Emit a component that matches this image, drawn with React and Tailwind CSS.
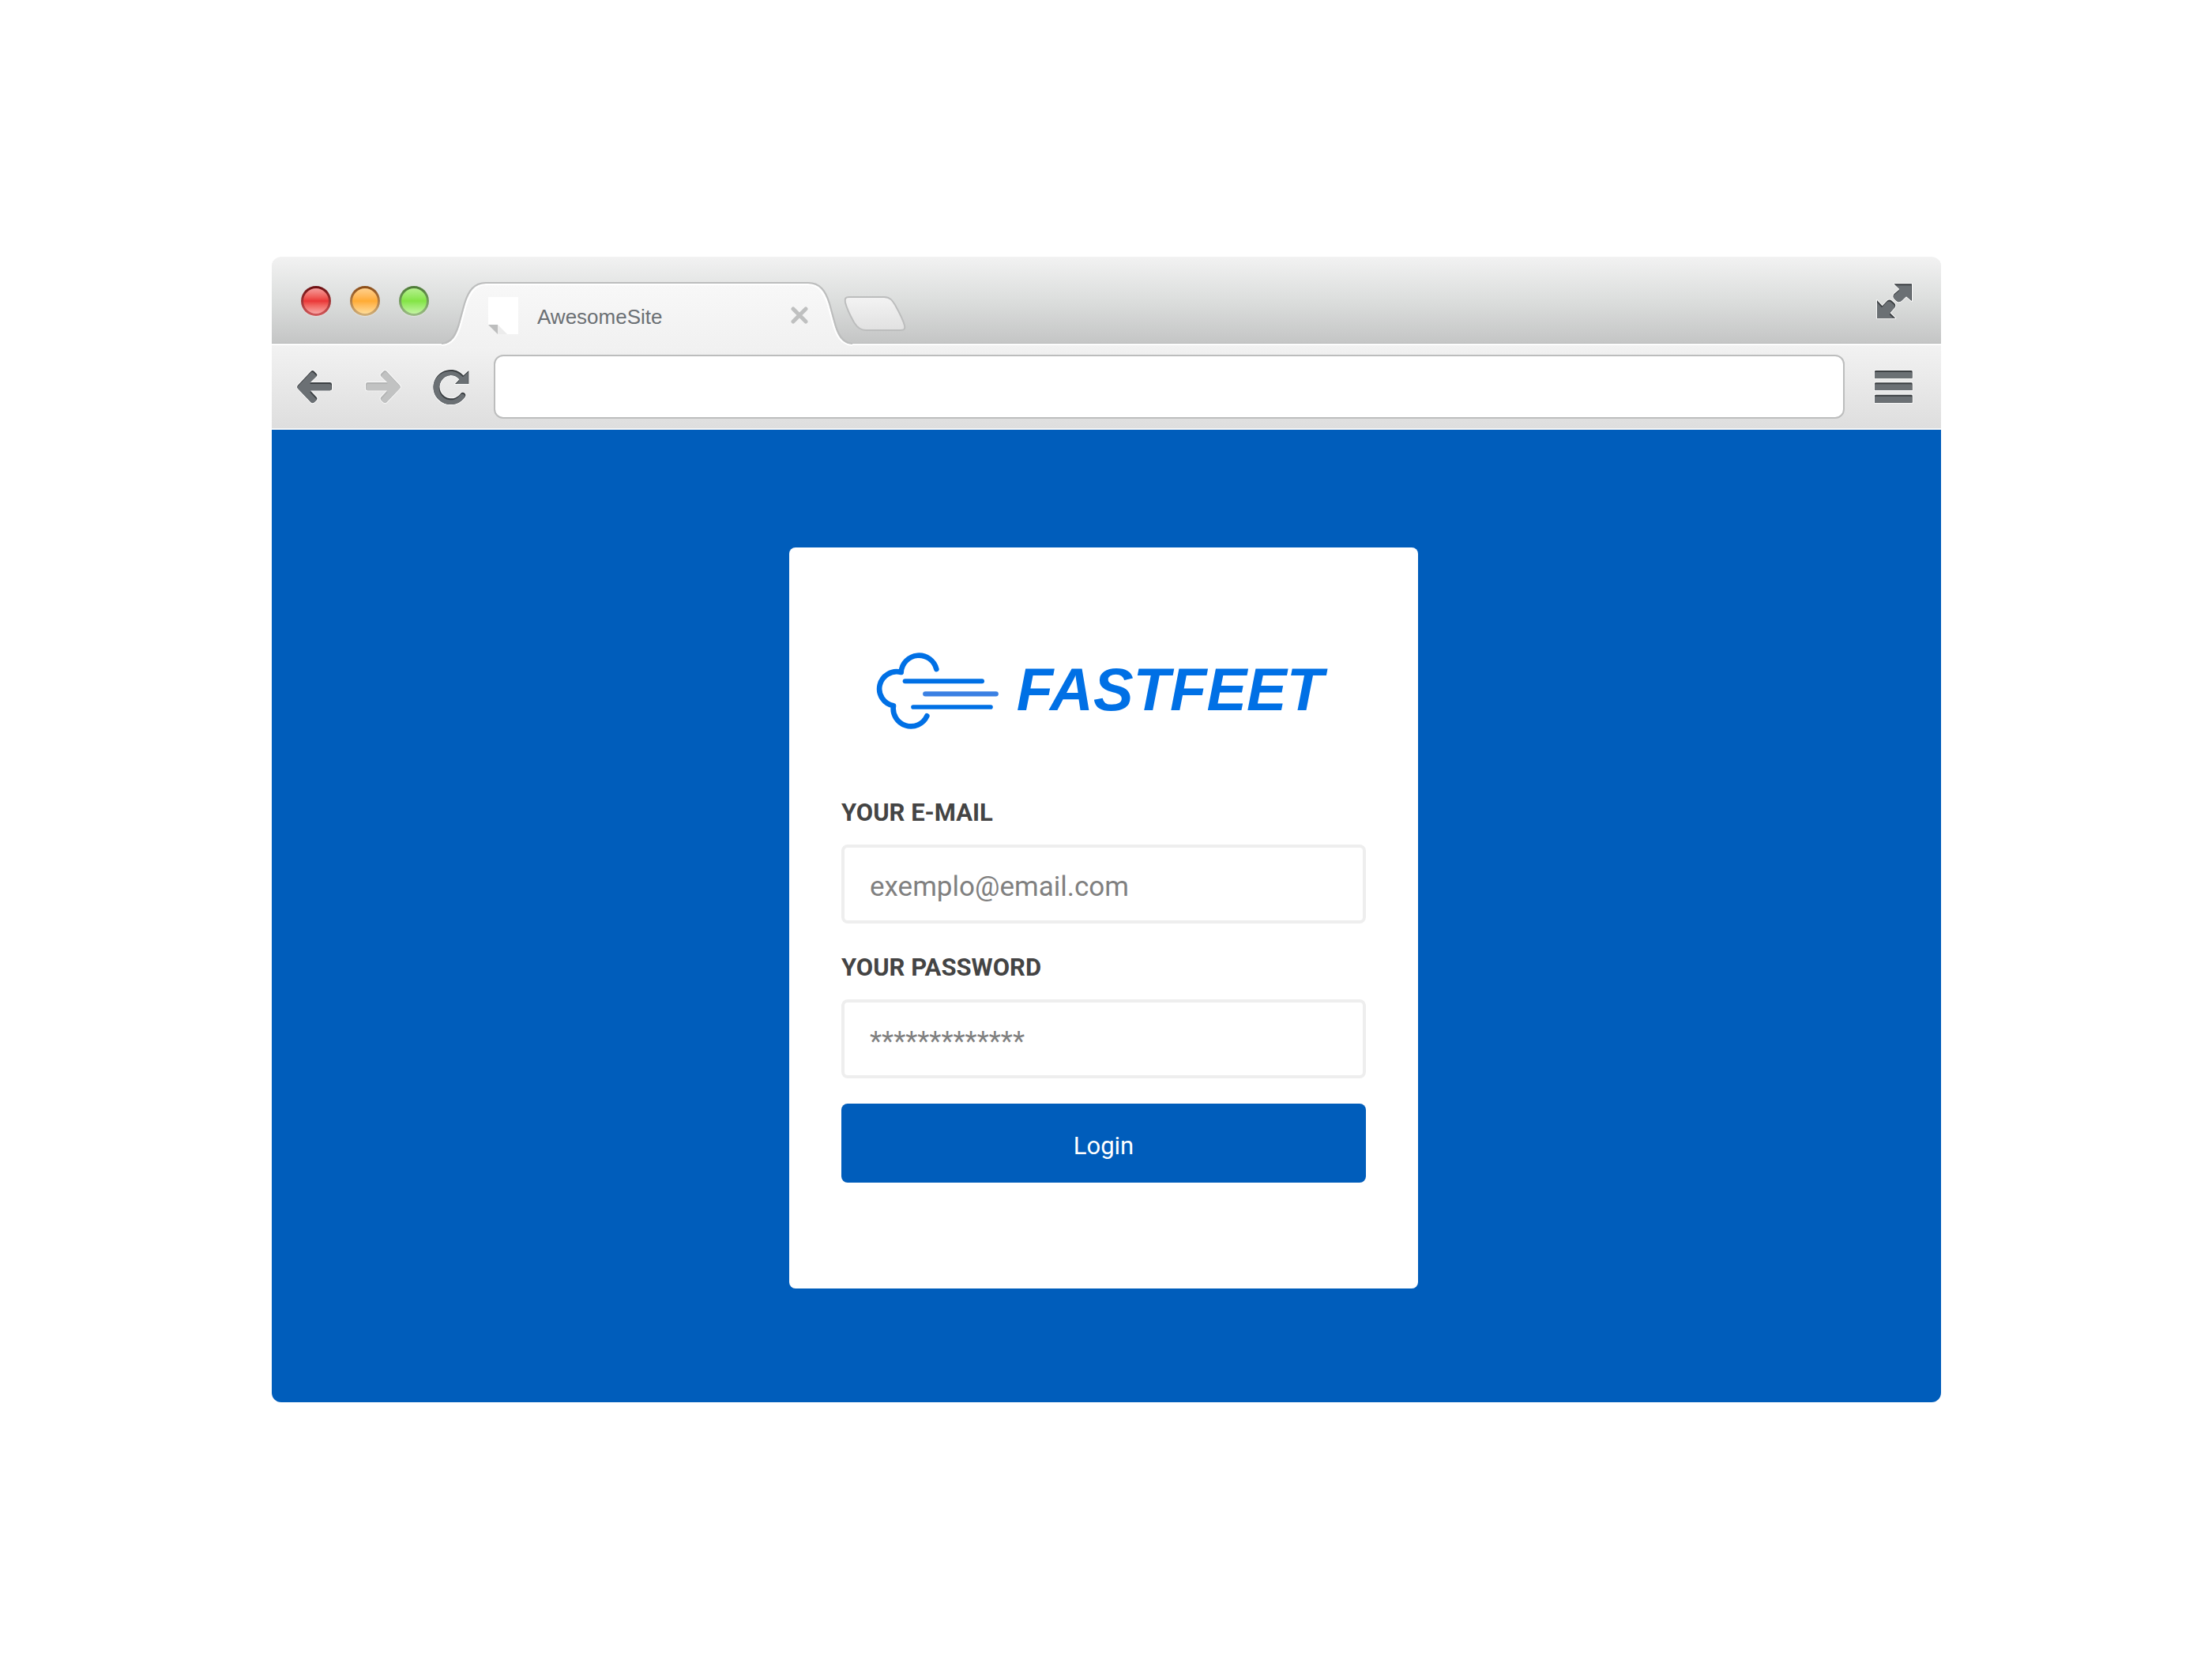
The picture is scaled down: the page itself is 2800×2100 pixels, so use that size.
import React from "react";

/* Engraved glyph: pale rim, dark upper edge, grey face. */
function Engraved({ id, d, viewBox, className, dark = "#3b3f42", face = "#6b7074" }) {
  return (
    <svg viewBox={viewBox} className={className} aria-hidden="true">
      <defs>
        <clipPath id={id}>
          <path d={d} />
        </clipPath>
      </defs>
      <path d={d} fill="#fafafa" stroke="#fafafa" strokeWidth="6" strokeLinejoin="round" />
      <path d={d} fill={dark} />
      <g clipPath={`url(#${id})`}>
        <path d={d} fill={face} transform="translate(-2 6)" />
      </g>
    </svg>
  );
}

const ARROW =
  "M141 530L191 477Q197 471 203 477L211 485Q217 491 212 496L188 519H263Q270 519 270 526V543Q270 550 263 550H188L212 575Q217 581 211 587L203 595Q197 600 191 595L141 542Q136 536 141 530Z";
const RELOAD =
  "M790 474V525H738L755 508C746 497 735 492 722 492A44 44 0 1 0 758 563C763 555 772 557 776 562C780 567 778 572 774 577A66 66 0 1 1 722 471C742 471 758 479 770 493Z";
const EXPAND =
  "M472 148H540V213L519 195L500 213Q490 220 482 213L473 204Q466 195 473 186L494 168ZM408 210L428 232L448 211Q456 205 464 212L474 221Q481 229 475 238L457 258L478 278H408Z";
const MENU =
  "M402 474H536Q540 474 540 478V503H397V478Q397 474 402 474ZM402 520H536Q540 520 540 524V549H397V524Q397 520 402 520ZM402 566H536Q540 566 540 570V596H397V570Q397 566 402 566Z";

function Light({ label, className, glow }) {
  return (
    <button
      type="button"
      aria-label={label}
      className={`flex size-[38px] items-center justify-center rounded-full p-[3px] shadow-[0_1px_1px_#ffffff66] ${className}`}
    >
      <span className={`block size-full rounded-full ${glow}`} />
    </button>
  );
}

function TabEdge({ flip }) {
  return (
    <svg
      viewBox="0 0 56 82"
      className={flip ? "h-[82px] w-[56px] shrink-0 -scale-x-100" : "h-[82px] w-[56px] shrink-0"}
      aria-hidden="true"
    >
      <defs>
        <linearGradient id={flip ? "edgeR" : "edgeL"} x1="0" y1="0" x2="0" y2="1">
          <stop offset="0" stopColor="#f8f8f8" />
          <stop offset="1" stopColor="#f1f1f1" />
        </linearGradient>
      </defs>
      <path
        d="M0 80C14 79 20 66 24 50L30 28C35 12 42 3 56 3V82H0Z"
        fill={flip ? "url(#edgeR)" : "url(#edgeL)"}
      />
      <path d="M0 80C15 79 21 67 25 51L31 29C36 13 43 3 56 3" fill="none" stroke="#fff" strokeWidth="2" />
      <path d="M0 78C13 77 19 65 23 49L29 27C34 11 41 1 56 1" fill="none" stroke="#bcbdbd" strokeWidth="2" />
    </svg>
  );
}

function TitleBar() {
  return (
    <header className="flex h-[110px] items-end justify-between rounded-t-xl bg-linear-to-b from-[#f2f2f2] via-[#dcdedd] to-[#c4c5c5] pl-[37px] pr-9 shadow-[inset_0_-1px_0_#b9baba]">
      <div className="flex items-end">
        <div className="mb-[35px] flex gap-6">
          <Light
            label="Close window"
            className="bg-linear-to-b from-[#6b0b0f] to-[#d4595b]"
            glow="bg-linear-to-b from-[#f49a9a] via-[#ea3536] to-[#f7a5a5]"
          />
          <Light
            label="Minimise window"
            className="bg-linear-to-b from-[#8a4a12] to-[#d3b27a]"
            glow="bg-linear-to-b from-[#ffd08a] via-[#ffab32] to-[#ffdc96]"
          />
          <Light
            label="Zoom window"
            className="bg-linear-to-b from-[#4c7a35] to-[#9cbd85]"
            glow="bg-linear-to-b from-[#b5f08c] via-[#83e443] to-[#c3f5a0]"
          />
        </div>
        <div className="relative -mb-1 ml-4 flex">
          <TabEdge />
          <div className="flex h-[82px] w-[408px] items-center border-t-2 border-[#bcbdbd] bg-linear-to-b from-[#f8f8f8] to-[#f1f1f1] pl-[3px] shadow-[inset_0_2px_0_#ffffff]">
            <svg viewBox="0 0 38 47" className="h-[47px] w-[38px]" aria-hidden="true">
              <path d="M0 0H38V47H23L12 35H0Z" fill="#fff" />
              <path d="M12 35L24 47H12Z" fill="#ececec" />
              <path d="M0 35H12V47Z" fill="#bdbebe" />
            </svg>
            <span className="ml-6 flex-1 pt-1 font-['Liberation_Sans',Arial,sans-serif] text-[26px] leading-8 text-[#6b7074]">
              AwesomeSite
            </span>
            <button type="button" aria-label="Close tab">
              <svg viewBox="0 0 22 22" className="size-[22px]" aria-hidden="true">
                <path d="M3 3L19 19M19 3L3 19" stroke="#bfc0c0" strokeWidth="5" strokeLinecap="round" />
              </svg>
            </button>
          </div>
          <TabEdge flip />
        </div>
        <button type="button" aria-label="New tab" className="relative -ml-3 mb-[15px]">
          <svg viewBox="0 0 80 46" className="h-[46px] w-[80px]" aria-hidden="true">
            <defs>
              <linearGradient id="newTab" x1="0" y1="0" x2="0" y2="1">
                <stop offset="0" stopColor="#f3f3f3" />
                <stop offset="1" stopColor="#e1e1e1" />
              </linearGradient>
            </defs>
            <path
              d="M8 2H52C60 2 63 7 66 12C71 21 76 30 78 38C79 42 78 44 73 44H29C21 44 17 39 14 34C9 25 5 17 3 9C2 4 3 2 8 2Z"
              fill="url(#newTab)"
              stroke="#bcbdbd"
              strokeWidth="2"
            />
          </svg>
        </button>
      </div>
      <button type="button" aria-label="Full screen" className="mb-[31px]">
        <Engraved id="clipExpand" d={EXPAND} viewBox="405 144 138 138" className="size-[46px]" />
      </button>
    </header>
  );
}

function Toolbar() {
  return (
    <nav className="flex items-center border-y-2 border-t-[#fcfcfc] border-b-[#f6f6f6] bg-linear-to-b from-[#f2f2f2] to-[#dedede] pb-3 pl-[31px] pr-[35px] pt-3">
      <button type="button" aria-label="Back">
        <Engraved id="clipBack" d={ARROW} viewBox="135 468 138 138" className="size-[46px]" />
      </button>
      <button type="button" aria-label="Forward" className="ml-[41px]" disabled>
        <Engraved
          id="clipForward"
          d={ARROW}
          viewBox="135 468 138 138"
          className="size-[46px] -scale-x-100"
          dark="#b3b4b4"
          face="#c1c2c2"
        />
      </button>
      <button type="button" aria-label="Reload" className="ml-10">
        <Engraved id="clipReload" d={RELOAD} viewBox="654 468 138 138" className="size-[46px]" />
      </button>
      <input
        type="text"
        aria-label="Address"
        className="ml-[31px] h-[81px] min-w-0 flex-1 rounded-xl border-2 border-[#bcbdbd] bg-white px-6 font-['Liberation_Sans',Arial,sans-serif] text-[26px] text-[#6b7074] outline-none"
      />
      <button type="button" aria-label="Menu" className="ml-[37px]">
        <Engraved id="clipMenu" d={MENU} viewBox="394 468 150 138" className="h-[46px] w-[50px]" />
      </button>
    </nav>
  );
}

function Logo() {
  return (
    <div className="flex items-center justify-center gap-[22px] pr-2.5 text-[#0070e5]">
      <svg viewBox="56 72 468 300" className="h-[100px] w-[156px]" fill="none" aria-hidden="true">
        <g stroke="currentColor" strokeWidth="20" strokeLinecap="round" strokeLinejoin="round">
          <path d="M285 138A68 68 0 0 0 151 150A65.200 65.200 0 1 0 122 277A67 67 0 0 0 249 316" />
          <path d="M166 184H458" strokeWidth="18" />
          <path d="M243 232H511" stroke="#3a80e3" strokeWidth="19" />
          <path d="M197 282H491" strokeWidth="17" />
        </g>
      </svg>
      <span className="pb-1 font-['Liberation_Sans',Arial,sans-serif] text-[76px] font-bold italic leading-[96px]">
        FASTFEET
      </span>
    </div>
  );
}

function Field({ id, label, type, placeholder }) {
  return (
    <div className="flex flex-col gap-[22px]">
      <label htmlFor={id} className="text-[31px] font-bold leading-9 text-[#444444]">
        {label}
      </label>
      <input
        id={id}
        type={type}
        placeholder={placeholder}
        className="h-[100px] w-full rounded-lg border-4 border-[#eeeeee] bg-white px-8 pt-1.5 text-[35px] text-[#444444] outline-none placeholder:text-[#808080]"
      />
    </div>
  );
}

function LoginCard() {
  return (
    <form
      onSubmit={(e) => e.preventDefault()}
      className="w-full max-w-[796px] rounded-lg bg-white px-[66px] pb-[134px] pt-[132px] font-[Roboto,sans-serif]"
    >
      <Logo />
      <div className="mt-[86px] flex flex-col gap-[38px]">
        <Field id="email" label="YOUR E-MAIL" type="email" placeholder="exemplo@email.com" />
        <Field id="password" label="YOUR PASSWORD" type="password" placeholder="*************" />
      </div>
      <button
        type="submit"
        className="mt-8 h-[100px] w-full rounded-lg bg-[#005dbb] pt-2 text-[31px] text-white"
      >
        Login
      </button>
    </form>
  );
}

export default function App() {
  return (
    <div className="flex min-h-screen items-center bg-white pl-[344px] pr-[343px]">
      <div className="min-w-0 flex-1">
        <TitleBar />
        <Toolbar />
        <main className="flex justify-center rounded-b-xl bg-[#005dbb] pb-[144px] pr-[7px] pt-[149px]">
          <LoginCard />
        </main>
      </div>
    </div>
  );
}
